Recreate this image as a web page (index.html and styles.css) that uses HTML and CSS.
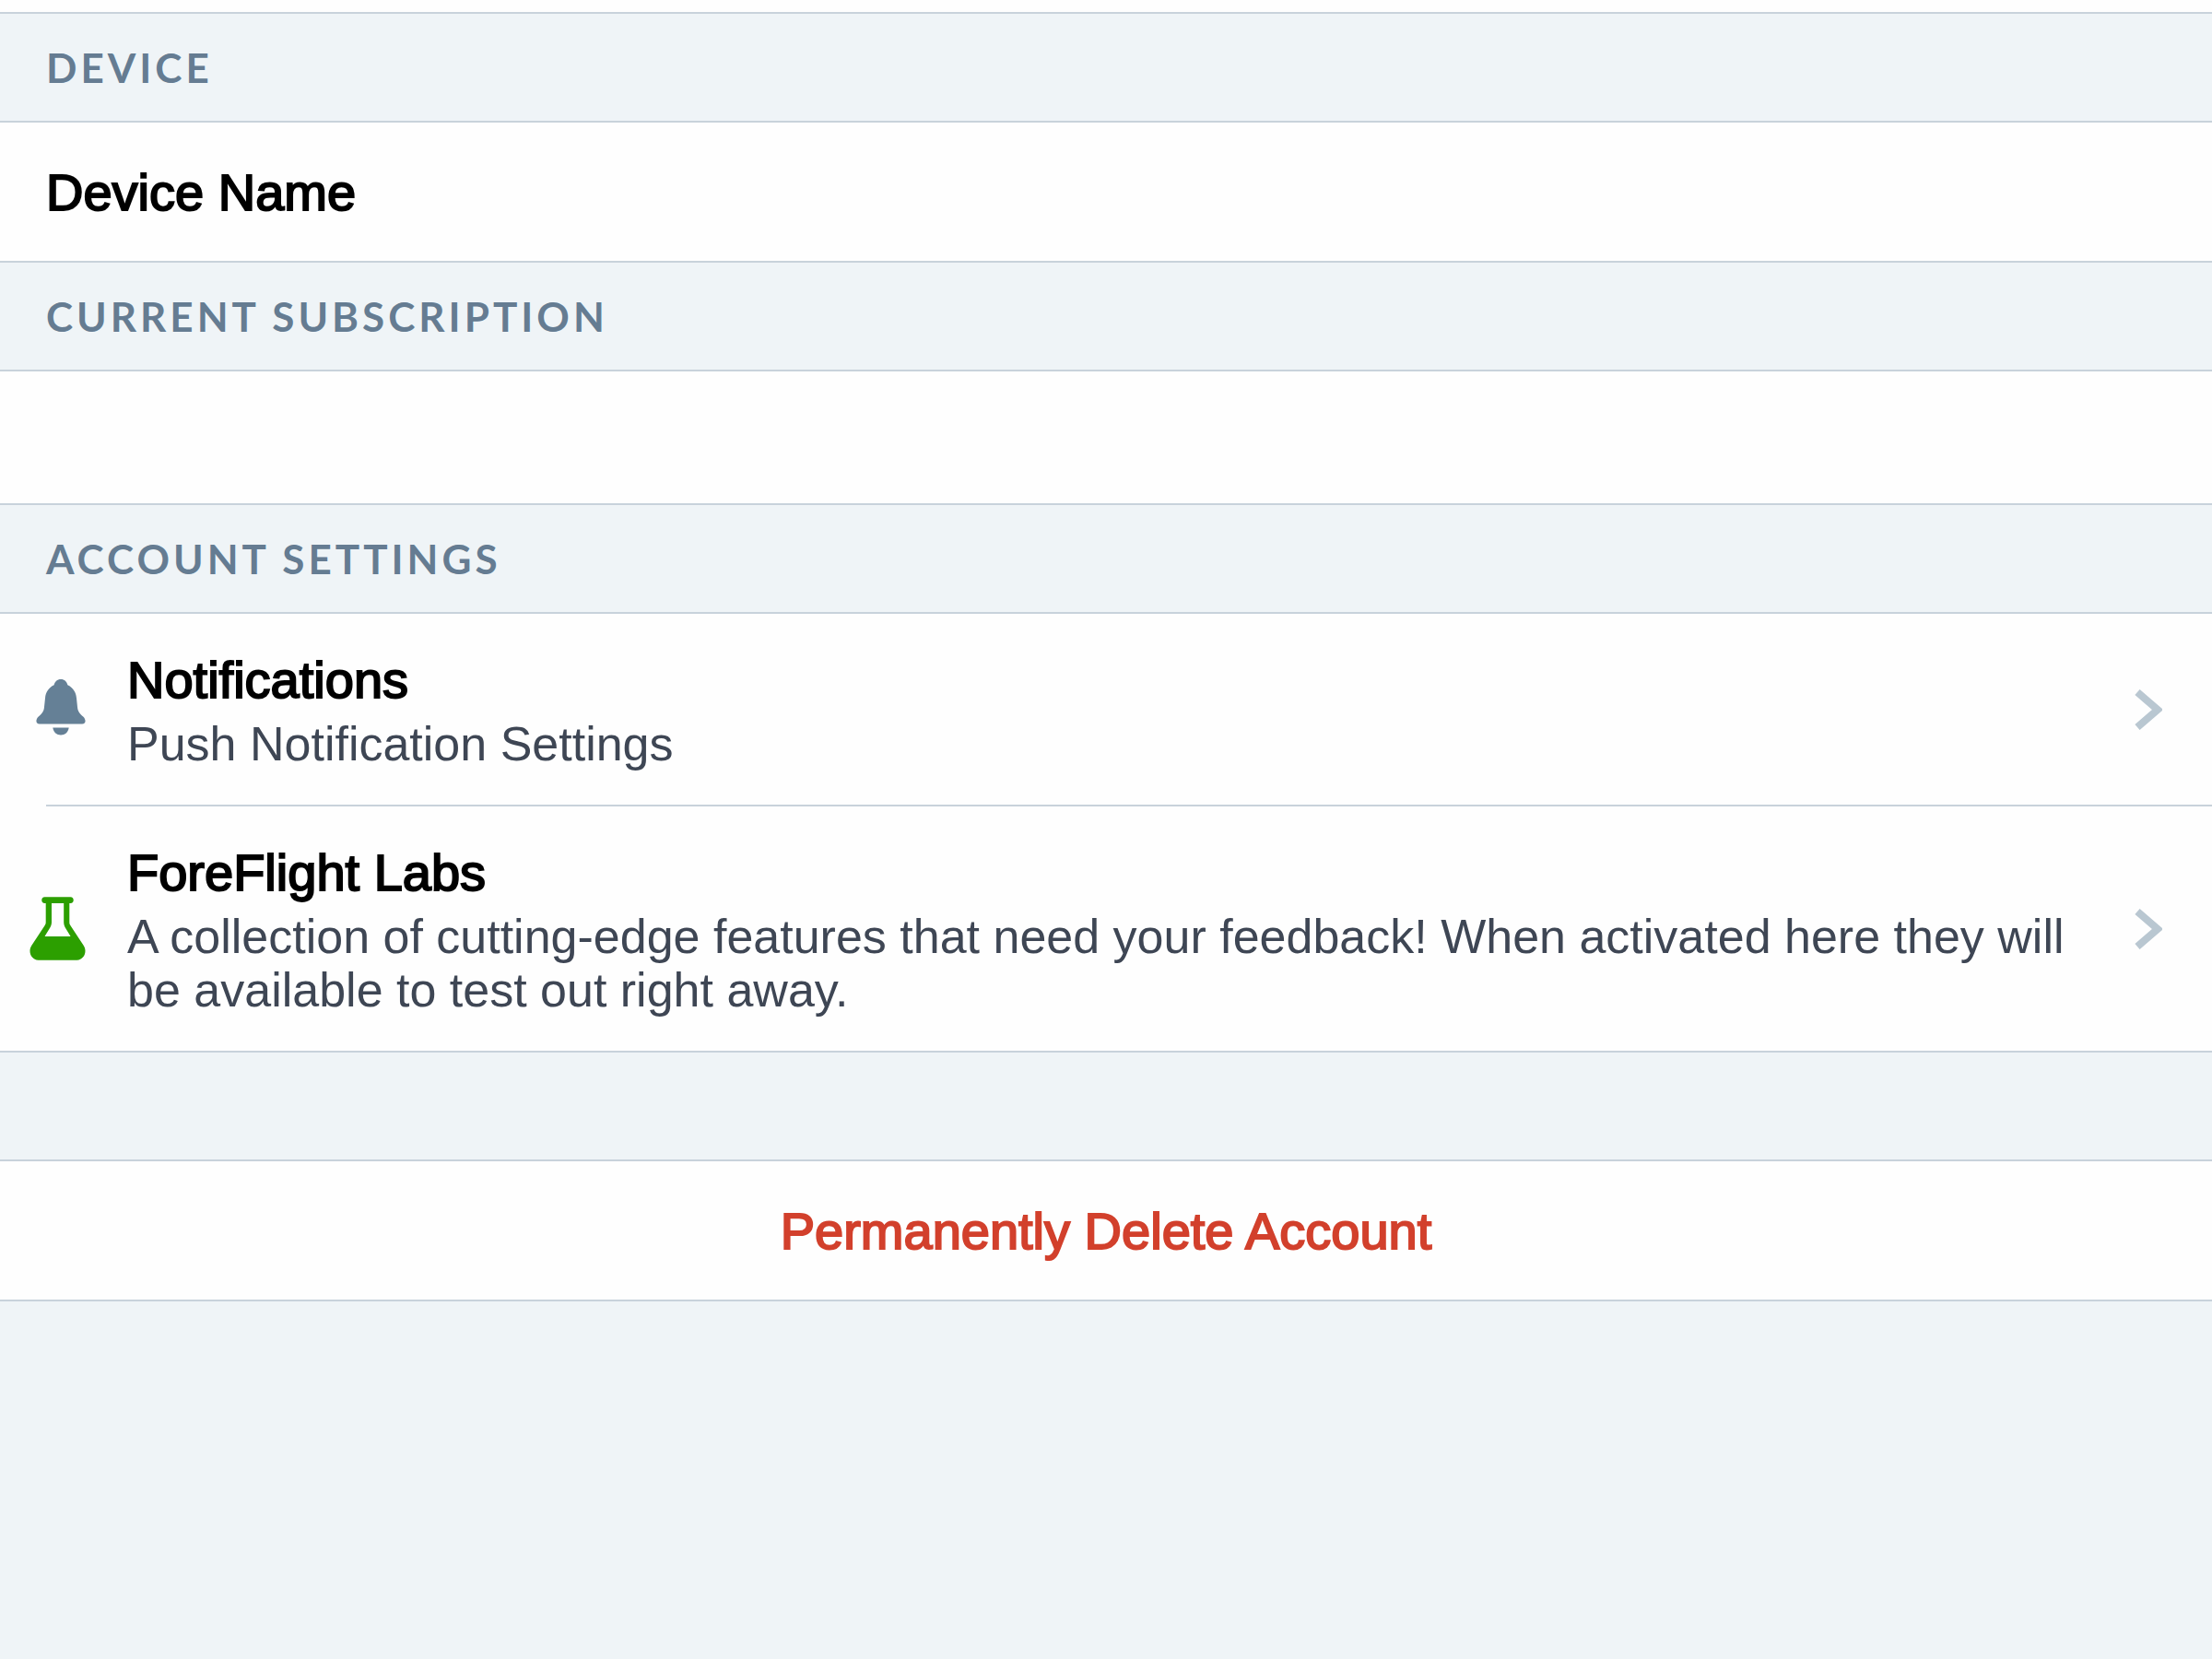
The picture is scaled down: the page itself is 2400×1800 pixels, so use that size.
FILE: index.html
```
<!DOCTYPE html>
<html lang="en">
<head>
    <meta charset="UTF-8">
    <meta name="viewport" content="width=device-width, initial-scale=1.0">
    <title>Account</title>
    <link rel="stylesheet" href="styles.css">
</head>
<body>
    <main class="settings">
        <h2 class="section-header">Device</h2>
        <div class="row">
            <span class="row-title">Device Name</span>
        </div>

        <h2 class="section-header">Current Subscription</h2>
        <div class="row row-empty"></div>

        <h2 class="section-header">Account Settings</h2>
        <nav class="links">
            <a class="link-row" href="#notifications">
                <svg class="icon icon-bell" viewBox="0 0 72 72" aria-hidden="true">
                    <path d="M38 3C34 3 31.500 5.600 30.600 9.300C25 12 21.500 17 21 23.500L20 33C19.600 38 17.800 39.800 13.500 43.800C10.800 46.500 10.200 51.500 15 51.500H61C65.800 51.500 65.200 46.500 62.500 43.800C58.200 39.800 56.400 38 56 33L55 23.500C54.500 17 51 12 45.400 9.300C44.500 5.600 42 3 38 3Z"/>
                    <path d="M29.300 55.500H46.700C46 60.500 42.500 63.500 38 63.500C33.500 63.500 30 60.500 29.300 55.500Z"/>
                </svg>
                <span class="link-text">
                    <span class="row-title">Notifications</span>
                    <span class="row-detail">Push Notification Settings</span>
                </span>
                <svg class="chevron" viewBox="0 0 30 44" aria-hidden="true">
                    <path d="M3 3L25 22L3 41"/>
                </svg>
            </a>
            <hr class="divider">
            <a class="link-row" href="#labs">
                <svg class="icon icon-flask" viewBox="0 0 72 72" aria-hidden="true">
                    <path fill-rule="evenodd" d="M20.500 1.300H48.500C52.800 1.300 52.800 8 48.500 8H47.300V28.500C47.300 30 47.600 31 48.500 32.300L62.800 54C67 60.500 63 69.700 55.500 69.700H13.500C6 69.700 2 60.500 6.200 54L20.500 32.300C21.400 31 21.700 30 21.700 28.500V8H20.500C16.200 8 16.200 1.300 20.500 1.300ZM28 8V28.500C28 30.500 27.500 32.500 26.300 34.500L20.500 44H48.600L42.800 34.500C41.700 32.500 41.200 30.500 41.200 28.500V8Z"/>
                </svg>
                <span class="link-text">
                    <span class="row-title">ForeFlight Labs</span>
                    <span class="row-detail">A collection of cutting-edge features that need your feedback! When activated here they will be available to test out right away.</span>
                </span>
                <svg class="chevron" viewBox="0 0 30 44" aria-hidden="true">
                    <path d="M3 3L25 22L3 41"/>
                </svg>
            </a>
        </nav>

        <div class="section-header"></div>
        <button class="row delete-button" type="button">Permanently Delete Account</button>
    </main>
</body>
</html>
```
FILE: styles.css
```
* {
    box-sizing: border-box;
}
body {
    margin: 0;
    background-color: #eff4f7;
    font-family: "Liberation Sans", Arial, sans-serif;
    color: #000;
}
.settings {
    padding-top: 13px;
    background-color: #fefefe;
    border-bottom: 2px solid #c8d2db;
}
.section-header {
    display: flex;
    align-items: center;
    min-height: 120px;
    margin: 0;
    padding: 0 50px;
    background-color: #eff4f7;
    border-top: 2px solid #c8d2db;
    border-bottom: 2px solid #c8d2db;
    font-family: Lato, sans-serif;
    font-size: 44px;
    font-weight: bold;
    letter-spacing: 4px;
    text-transform: uppercase;
    color: #657c92;
}
.row {
    display: flex;
    align-items: center;
    width: 100%;
    min-height: 150px;
    padding: 2px 50px 0;
}
.row-empty {
    min-height: 143px;
}
/* medium weight: regular letters with a thin outline */
.row-title,
.delete-button {
    font-size: 56px;
    line-height: 64px;
    -webkit-text-stroke: 2px currentColor;
}
.link-row {
    display: flex;
    align-items: center;
    padding: 38px 54px 37px 28px;
    color: inherit;
    text-decoration: none;
}
.icon {
    flex: none;
    width: 72px;
    height: 72px;
    margin-right: 38px;
}
.icon-bell {
    fill: #658096;
}
.icon-flask {
    fill: #2c9f00;
}
.link-text {
    flex: 1;
    display: flex;
    flex-direction: column;
    gap: 8px;
    padding-top: 2px;
}
.row-detail {
    font-size: 52px;
    line-height: 58px;
    color: #3e4654;
}
.chevron {
    flex: none;
    width: 30px;
    height: 44px;
    margin-left: 48px;
    fill: none;
    stroke: #b9c7d1;
    stroke-width: 8;
}
.divider {
    height: 2px;
    margin: 0 0 0 50px;
    border: none;
    background-color: #c8d2db;
}
.delete-button {
    justify-content: center;
    background: none;
    border: none;
    font-family: inherit;
    color: #d2402c;
    cursor: pointer;
}
```
